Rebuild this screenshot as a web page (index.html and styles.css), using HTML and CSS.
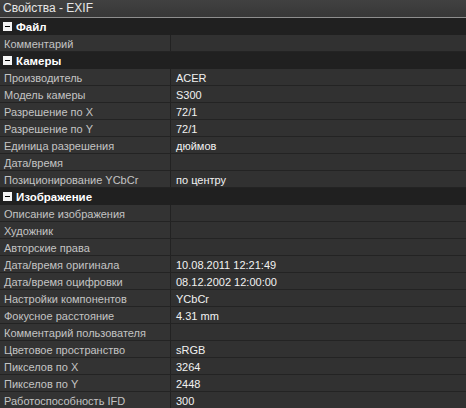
FILE: index.html
```html
<!DOCTYPE html>
<html>
<head>
<meta charset="utf-8">
<link rel="stylesheet" href="styles.css">
</head>
<body>
<div class="panel">
  <div class="title">Свойства - EXIF</div>
  <div class="group"><span class="tog"></span>Файл</div>
  <div class="row"><div class="k">Комментарий</div><div class="v"></div></div>
  <div class="group"><span class="tog"></span>Камеры</div>
  <div class="row"><div class="k">Производитель</div><div class="v">ACER</div></div>
  <div class="row"><div class="k">Модель камеры</div><div class="v">S300</div></div>
  <div class="row"><div class="k">Разрешение по X</div><div class="v">72/1</div></div>
  <div class="row"><div class="k">Разрешение по Y</div><div class="v">72/1</div></div>
  <div class="row"><div class="k">Единица разрешения</div><div class="v">дюймов</div></div>
  <div class="row"><div class="k">Дата/время</div><div class="v"></div></div>
  <div class="row"><div class="k">Позиционирование YCbCr</div><div class="v">по центру</div></div>
  <div class="group"><span class="tog"></span>Изображение</div>
  <div class="row"><div class="k">Описание изображения</div><div class="v"></div></div>
  <div class="row"><div class="k">Художник</div><div class="v"></div></div>
  <div class="row"><div class="k">Авторские права</div><div class="v"></div></div>
  <div class="row"><div class="k">Дата/время оригинала</div><div class="v">10.08.2011 12:21:49</div></div>
  <div class="row"><div class="k">Дата/время оцифровки</div><div class="v">08.12.2002 12:00:00</div></div>
  <div class="row"><div class="k">Настройки компонентов</div><div class="v">YCbCr</div></div>
  <div class="row"><div class="k">Фокусное расстояние</div><div class="v">4.31 mm</div></div>
  <div class="row"><div class="k">Комментарий пользователя</div><div class="v"></div></div>
  <div class="row"><div class="k">Цветовое пространство</div><div class="v">sRGB</div></div>
  <div class="row"><div class="k">Пикселов по X</div><div class="v">3264</div></div>
  <div class="row"><div class="k">Пикселов по Y</div><div class="v">2448</div></div>
  <div class="row"><div class="k">Работоспособность IFD</div><div class="v">300</div></div>
</div>
</body>
</html>
```
FILE: styles.css
```css
html, body {
  margin: 0;
  padding: 0;
  background: #333333;
}
.panel {
  width: 466px;
  height: 408px;
  overflow: hidden;
  font-family: "Liberation Sans", Arial, sans-serif;
  font-size: 11px;
  background: #333333;
}
.title {
  height: 17px;
  line-height: 17px;
  padding-left: 3px;
  font-size: 12px;
  color: #e6e6e6;
  background: linear-gradient(#414141, #373737);
  border-bottom: 1px solid #8e8e8e;
}
.group {
  height: 17px;
  line-height: 16px;
  background: #202020;
  color: #ffffff;
  font-weight: bold;
  font-size: 11.5px;
  display: flex;
  align-items: center;
  padding-left: 3px;
}
.tog {
  width: 9px;
  height: 9px;
  background: #f4f4f4;
  position: relative;
  margin-right: 4px;
  flex: none;
}
.tog::after {
  content: "";
  position: absolute;
  left: 2px;
  top: 4px;
  width: 5px;
  height: 1px;
  background: #000;
}
.row {
  height: 16px;
  display: grid;
  grid-template-columns: 171px 1fr;
  border-bottom: 1px solid #232323;
  line-height: 18px;
  overflow: hidden;
}
.k {
  padding-left: 4px;
  color: #c4c4c4;
  border-right: 1px solid #222222;
  white-space: nowrap;
  overflow: hidden;
}
.v {
  padding-left: 5px;
  color: #f2f2f2;
  background: #313131;
  white-space: nowrap;
}
```
